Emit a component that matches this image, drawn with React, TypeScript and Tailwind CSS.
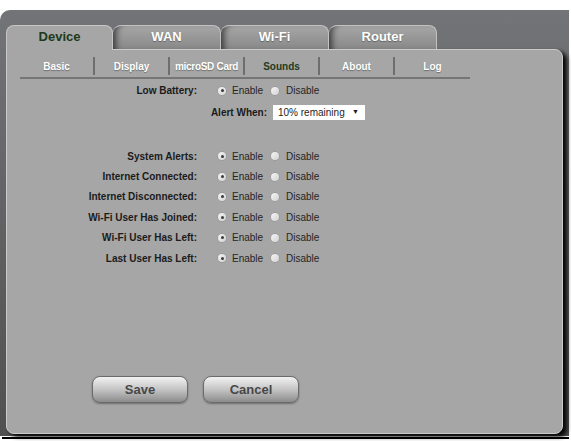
const mainTabs = ['Device', 'WAN', 'Wi-Fi', 'Router']
const subTabs = ['Basic', 'Display', 'microSD Card', 'Sounds', 'About', 'Log']
const alerts = [
  'System Alerts:',
  'Internet Connected:',
  'Internet Disconnected:',
  'Wi-Fi User Has Joined:',
  'Wi-Fi User Has Left:',
  'Last User Has Left:',
]

function Radio({ checked }: { checked: boolean }) {
  return (
    <span className="flex h-[8px] w-[8px] items-center justify-center rounded-full bg-gradient-to-br from-[#f6f6f6] to-[#d2d2d2] shadow-[0_0_0_0.5px_rgba(120,120,120,0.5)]">
      {checked && <span className="h-[3px] w-[3px] rounded-full bg-[#3a3a3a]" />}
    </span>
  )
}

function ToggleRow({ label, height }: { label: string; height: string }) {
  return (
    <div className={`flex items-center ${height}`}>
      <span className="w-[190px] text-right text-[10px] font-bold text-[#1b1b1b]">{label}</span>
      <span className="ml-[21px]">
        <Radio checked />
      </span>
      <span className="ml-[6px] w-[39px] text-[10px] text-[#252525]">Enable</span>
      <Radio checked={false} />
      <span className="ml-[7px] text-[10px] text-[#252525]">Disable</span>
    </div>
  )
}

function Button({ children }: { children: string }) {
  return (
    <button className="h-[27px] w-[96px] rounded-[8px] border border-[#6b6b6b] bg-gradient-to-b from-[#f2f2f2] via-[#c4c4c4] to-[#8c8c8c] text-[13px] font-bold text-[#474747] shadow-[0_1px_2px_rgba(0,0,0,0.35)]">
      {children}
    </button>
  )
}

export default function App() {
  return (
    <div className="h-[441px] w-[571px] overflow-hidden bg-white pt-[10px] font-['Liberation_Sans',Arial,sans-serif]">
      <div className="h-[426px] w-[569px] rounded-tl-[10px] bg-gradient-to-b from-[#737477] to-[#505050] pl-[6px] pt-[15px]">
        <div className="flex h-[24px]">
          {mainTabs.map((tab, i) =>
            i === 0 ? (
              <div
                key={tab}
                className="relative z-10 flex h-[25px] w-[107px] items-start justify-center rounded-t-[8px] border-l border-r border-t border-[#c6c6c6] bg-[#a6a6a6] pt-[1px] text-[13px] font-bold text-[#1c3a1c]"
              >
                {tab}
              </div>
            ) : (
              <div
                key={tab}
                className="flex w-[108px] items-start justify-center rounded-t-[8px] border-r border-t border-[#c2c2c2] bg-gradient-to-b from-[#a6a6a6] to-[#898989] pt-[1px] text-[13px] font-bold text-white shadow-[inset_7px_0_6px_-4px_rgba(0,0,0,0.6)] [text-shadow:0_1px_1px_rgba(0,0,0,0.35)]"
              >
                {tab}
              </div>
            )
          )}
        </div>
        <div className="flex h-[385px] w-[557px] flex-col rounded-b-[8px] rounded-tr-[8px] border border-[#cbcbcb] bg-[#a6a6a6] shadow-[4px_3px_4px_rgba(0,0,0,0.95)]">
          <div className="ml-[13px] mt-[5px] flex h-[24px] w-[450px] border-b-2 border-[#767676]">
            {subTabs.map((tab, i) => (
              <div key={tab} className="flex w-[75px] items-center">
                <span
                  className={`flex-1 text-center text-[10px] font-bold ${
                    tab === 'Sounds'
                      ? 'text-[#1e3b1e]'
                      : 'text-white [text-shadow:0_1px_1px_rgba(0,0,0,0.35)]'
                  } ${tab === 'microSD Card' ? 'tracking-[-0.3px]' : ''}`}
                >
                  {tab}
                </span>
                {i < subTabs.length - 1 && <span className="h-[18px] w-[2px] bg-[#6e6e6e]" />}
              </div>
            ))}
          </div>

          <div className="mt-[1px]">
            <ToggleRow label="Low Battery:" height="h-[21px]" />
            <div className="flex h-[22px] items-center">
              <span className="w-[260px] text-right text-[10px] font-bold text-[#1b1b1b]">Alert When:</span>
              <div className="ml-[6px] flex h-[15px] w-[92px] items-center justify-between bg-white pl-[5px] pr-[6px] text-[10px] text-[#1e1e1e]">
                <span>10% remaining</span>
                <span className="text-[7px]">▼</span>
              </div>
            </div>
          </div>

          <div className="mt-[23px]">
            {alerts.map((label) => (
              <ToggleRow key={label} label={label} height="h-[20.4px]" />
            ))}
          </div>

          <div className="mb-[30px] ml-[85px] mt-auto flex gap-[15px]">
            <Button>Save</Button>
            <Button>Cancel</Button>
          </div>
        </div>
      </div>
      <div className="ml-[2px] mt-[1px] h-[2px] w-[567px] bg-black" />
    </div>
  )
}
